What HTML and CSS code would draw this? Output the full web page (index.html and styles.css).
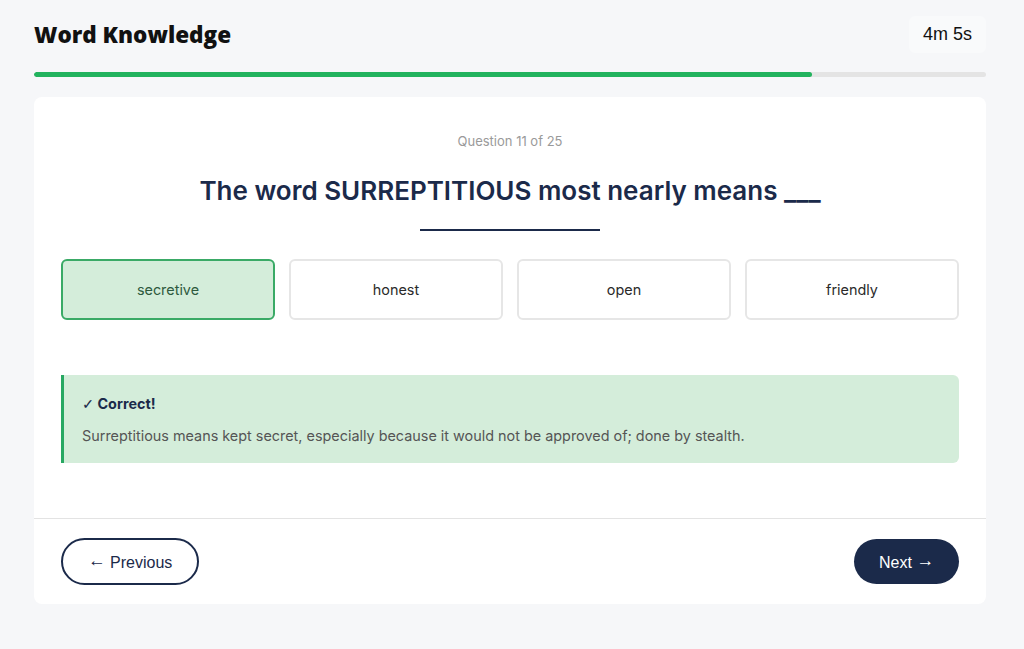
FILE: index.html
```html
<!DOCTYPE html>
<html lang="en">
<head>
    <meta charset="UTF-8">
    <meta name="viewport" content="width=device-width, initial-scale=1.0">
    <title>Word Knowledge</title>
    <link rel="stylesheet" href="styles.css">
</head>
<body>
    <div class="quiz-page">
        <div class="quiz-header">
            <div class="quiz-title">Word Knowledge</div>
            <div class="quiz-timer">4m 5s</div>
        </div>
        <div class="progress">
            <div class="progress-fill" style="width: 81.7%"></div>
        </div>

        <div class="quiz-card">
            <div class="quiz-body">
                <div class="question-meta">Question 11 of 25</div>
                <div class="question-text">The word SURREPTITIOUS most nearly means ___</div>
                <div class="question-line"></div>

                <div class="options">
                    <div class="option option-correct">secretive</div>
                    <div class="option">honest</div>
                    <div class="option">open</div>
                    <div class="option">friendly</div>
                </div>

                <div class="feedback">
                    <div class="feedback-title"><span class="glyph">✓</span> Correct!</div>
                    <div class="feedback-text">Surreptitious means kept secret, especially because it would not be approved of; done by stealth.</div>
                </div>
            </div>

            <div class="quiz-footer">
                <button class="btn btn-outline"><span class="arrow">←</span> Previous</button>
                <button class="btn btn-solid">Next <span class="arrow">→</span></button>
            </div>
        </div>
    </div>
</body>
</html>
```

FILE: styles.css
```css
body {
    margin: 0;
    background: #f6f7f9;
    font-family: Inter, "Liberation Sans", Arial, sans-serif;
    color: #1b2a4a;
}

.quiz-page {
    padding: 0 38px 0 34px;
}

.glyph {
    font-family: "DejaVu Sans", sans-serif;
    font-weight: normal;
}

.arrow {
    font-size: 1.1em;
    line-height: 1;
    vertical-align: 2px;
}

.quiz-header {
    display: flex;
    justify-content: space-between;
    align-items: center;
    height: 52px;
    padding-top: 8px;
}

.quiz-title {
    font-family: "Open Sans", Arial, sans-serif;
    font-size: 22.5px;
    font-weight: 800;
    color: #111;
}

.quiz-timer {
    font-family: "Liberation Sans", Arial, sans-serif;
    font-size: 18px;
    color: #111;
    background: #f9fafb;
    padding: 8px 14px;
    border-radius: 6px;
}

.progress {
    height: 5px;
    margin-top: 12px;
    background: #e4e4e4;
    border-radius: 3px;
    overflow: hidden;
}

.progress-fill {
    height: 100%;
    background: #22b35e;
    border-radius: 3px;
}

.quiz-card {
    margin-top: 20px;
    background: #fff;
    border-radius: 8px;
}

.quiz-body {
    padding: 36px 27px 55px;
    text-align: center;
}

.question-meta {
    font-size: 13px;
    line-height: 16px;
    color: #9a9a9a;
}

.question-text {
    margin-top: 26px;
    font-size: 26px;
    line-height: 32px;
    font-weight: 600;
    color: #1b2a4a;
}

.question-line {
    width: 180px;
    height: 2px;
    margin: 22px auto 0;
    background: #1b2a4a;
}

.options {
    display: grid;
    grid-template-columns: repeat(4, 1fr);
    gap: 14px;
    margin-top: 28px;
}

.option {
    height: 61px;
    box-sizing: border-box;
    display: flex;
    align-items: center;
    justify-content: center;
    border: 2px solid #e6e6e6;
    border-radius: 6px;
    font-size: 14.4px;
    color: #2a2a2a;
    background: #fff;
}

.option-correct {
    background: #d4edda;
    border-color: #3aaa66;
    color: #2e5a3e;
}

.feedback {
    margin-top: 55px;
    padding: 19px 20px 17px 18px;
    background: #d4edda;
    border-left: 3px solid #28a862;
    border-radius: 0 6px 6px 0;
    text-align: left;
}

.feedback-title {
    font-size: 14.4px;
    line-height: 20px;
    font-weight: 700;
    color: #1b2a4a;
}

.feedback-text {
    margin-top: 12px;
    font-size: 14.4px;
    line-height: 20px;
    color: #555;
}

.quiz-footer {
    display: flex;
    justify-content: space-between;
    align-items: center;
    padding: 19px 27px;
    border-top: 1px solid #e3e3e3;
}

.btn {
    font-family: "Liberation Sans", Arial, sans-serif;
    font-size: 16px;
    height: 47px;
    padding: 0 25px;
    border-radius: 24px;
    cursor: pointer;
}

.btn-outline {
    background: #fff;
    border: 2px solid #1b2a4a;
    color: #1b2a4a;
}

.btn-solid {
    height: 45px;
    background: #1b2a4a;
    border: none;
    color: #fff;
}
```
